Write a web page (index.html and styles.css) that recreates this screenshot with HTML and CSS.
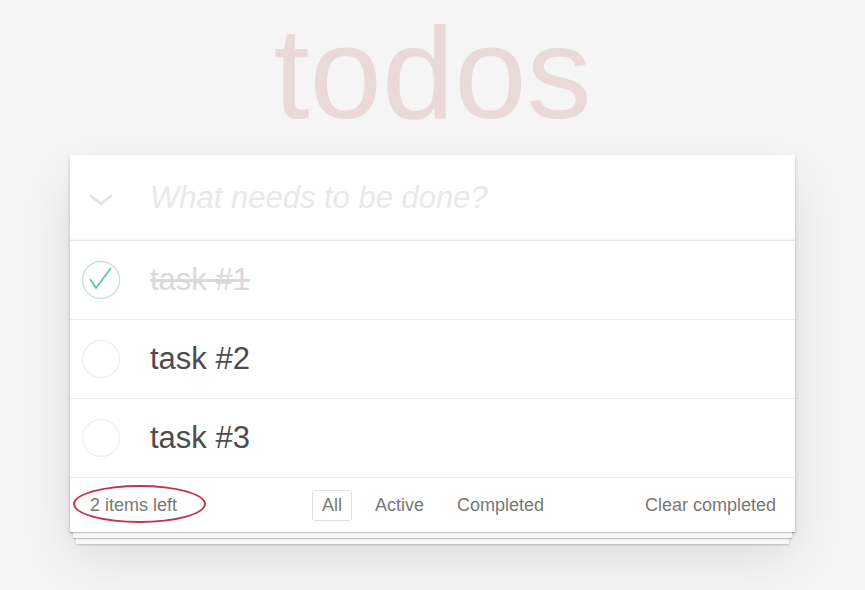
FILE: index.html
```html
<!DOCTYPE html>
<html lang="en">
<head>
<meta charset="utf-8">
<title>todos</title>
<link rel="stylesheet" href="styles.css">
</head>
<body>
<section class="app">
  <h1 class="title">todos</h1>
  <div class="card">
    <header class="new-todo">
      <span class="icon-cell">
        <svg class="chevron" width="24" height="12" viewBox="0 0 24 12"><polyline points="2,2 12,10 22,2" fill="none" stroke="#e3e3e3" stroke-width="2.6" stroke-linecap="round" stroke-linejoin="round"/></svg>
      </span>
      <span class="placeholder">What needs to be done?</span>
    </header>
    <ul class="todo-list">
      <li class="todo done">
        <span class="icon-cell">
          <svg class="check" width="40" height="40" viewBox="0 0 40 40"><circle cx="20" cy="20" r="18.5" fill="none" stroke="#c8e2dd" stroke-width="1.3"/><polyline points="9,19 15,28 30,8" fill="none" stroke="#5dc2af" stroke-width="1.7"/></svg>
        </span>
        <span class="label">task #1</span>
      </li>
      <li class="todo">
        <span class="icon-cell">
          <svg class="check" width="40" height="40" viewBox="0 0 40 40"><circle cx="20" cy="20" r="18.5" fill="none" stroke="#efefef" stroke-width="1.3"/></svg>
        </span>
        <span class="label">task #2</span>
      </li>
      <li class="todo">
        <span class="icon-cell">
          <svg class="check" width="40" height="40" viewBox="0 0 40 40"><circle cx="20" cy="20" r="18.5" fill="none" stroke="#efefef" stroke-width="1.3"/></svg>
        </span>
        <span class="label">task #3</span>
      </li>
    </ul>
    <footer class="footer">
      <span class="count">2 items left</span>
      <ul class="filters">
        <li class="filter selected">All</li>
        <li class="filter">Active</li>
        <li class="filter">Completed</li>
      </ul>
      <span class="clear">Clear completed</span>
      <span class="mark"></span>
    </footer>
  </div>
</section>
</body>
</html>
```

FILE: styles.css
```css
html, body {
  margin: 0;
  padding: 0;
}

body {
  background: #f5f5f5;
  font-family: "Liberation Sans", Arial, "Helvetica Neue", sans-serif;
  color: #4d4d4d;
  height: 590px;
  overflow: hidden;
}

.app {
  width: 725px;
  margin: 0 auto;
}

.title {
  margin: 8px 0 17px;
  font-size: 130px;
  line-height: 130px;
  font-weight: normal;
  text-align: center;
  color: rgba(175, 47, 47, 0.14);
}

.card {
  background: #fff;
  box-shadow: 0 2px 4px rgba(0, 0, 0, 0.2), 0 25px 50px rgba(0, 0, 0, 0.1);
}

.new-todo,
.todo {
  display: flex;
  align-items: center;
  gap: 29px;
  padding-left: 11px;
}

.new-todo {
  height: 85px;
  border-bottom: 1px solid #e8e8e8;
  box-shadow: inset 0 -2px 1px rgba(0, 0, 0, 0.03);
}

.icon-cell {
  width: 40px;
  height: 40px;
  display: flex;
  align-items: center;
  justify-content: center;
  flex: none;
}

.chevron {
  display: block;
  margin-top: 4px;
}

.check {
  display: block;
}

.placeholder {
  font-size: 31px;
  font-style: italic;
  color: #e9e9e9;
  line-height: 36px;
}

.todo-list {
  list-style: none;
  margin: 0;
  padding: 0;
}

.todo {
  height: 78px;
  border-bottom: 1px solid #ededed;
}

.label {
  font-size: 31px;
  line-height: 36px;
  color: #4d4d4d;
}

.done .label {
  color: #d9d9d9;
  text-decoration: line-through;
}

.footer {
  position: relative;
  height: 54px;
  padding: 0 19px 0 20px;
  display: grid;
  grid-template-columns: 1fr auto 1fr;
  align-items: center;
  font-size: 18px;
  color: #777;
  box-shadow: 0 1px 1px rgba(0, 0, 0, 0.2),
    0 9px 0 -3px #f6f6f6,
    0 10px 1px -3px rgba(0, 0, 0, 0.2),
    0 18px 0 -6px #f6f6f6,
    0 19px 2px -6px rgba(0, 0, 0, 0.2);
}

.filters {
  list-style: none;
  margin: 0;
  padding: 0;
  display: flex;
  gap: 13px;
}

.filter {
  padding: 4px 9px;
  line-height: 21px;
  border: 1px solid transparent;
  border-radius: 3px;
}

.filter.selected {
  border-color: #e5dcdc;
}

.clear {
  justify-self: end;
}

.mark {
  position: absolute;
  left: 3px;
  top: 7px;
  width: 129px;
  height: 34px;
  border: 2px solid #c23540;
  border-radius: 50%;
}
```
